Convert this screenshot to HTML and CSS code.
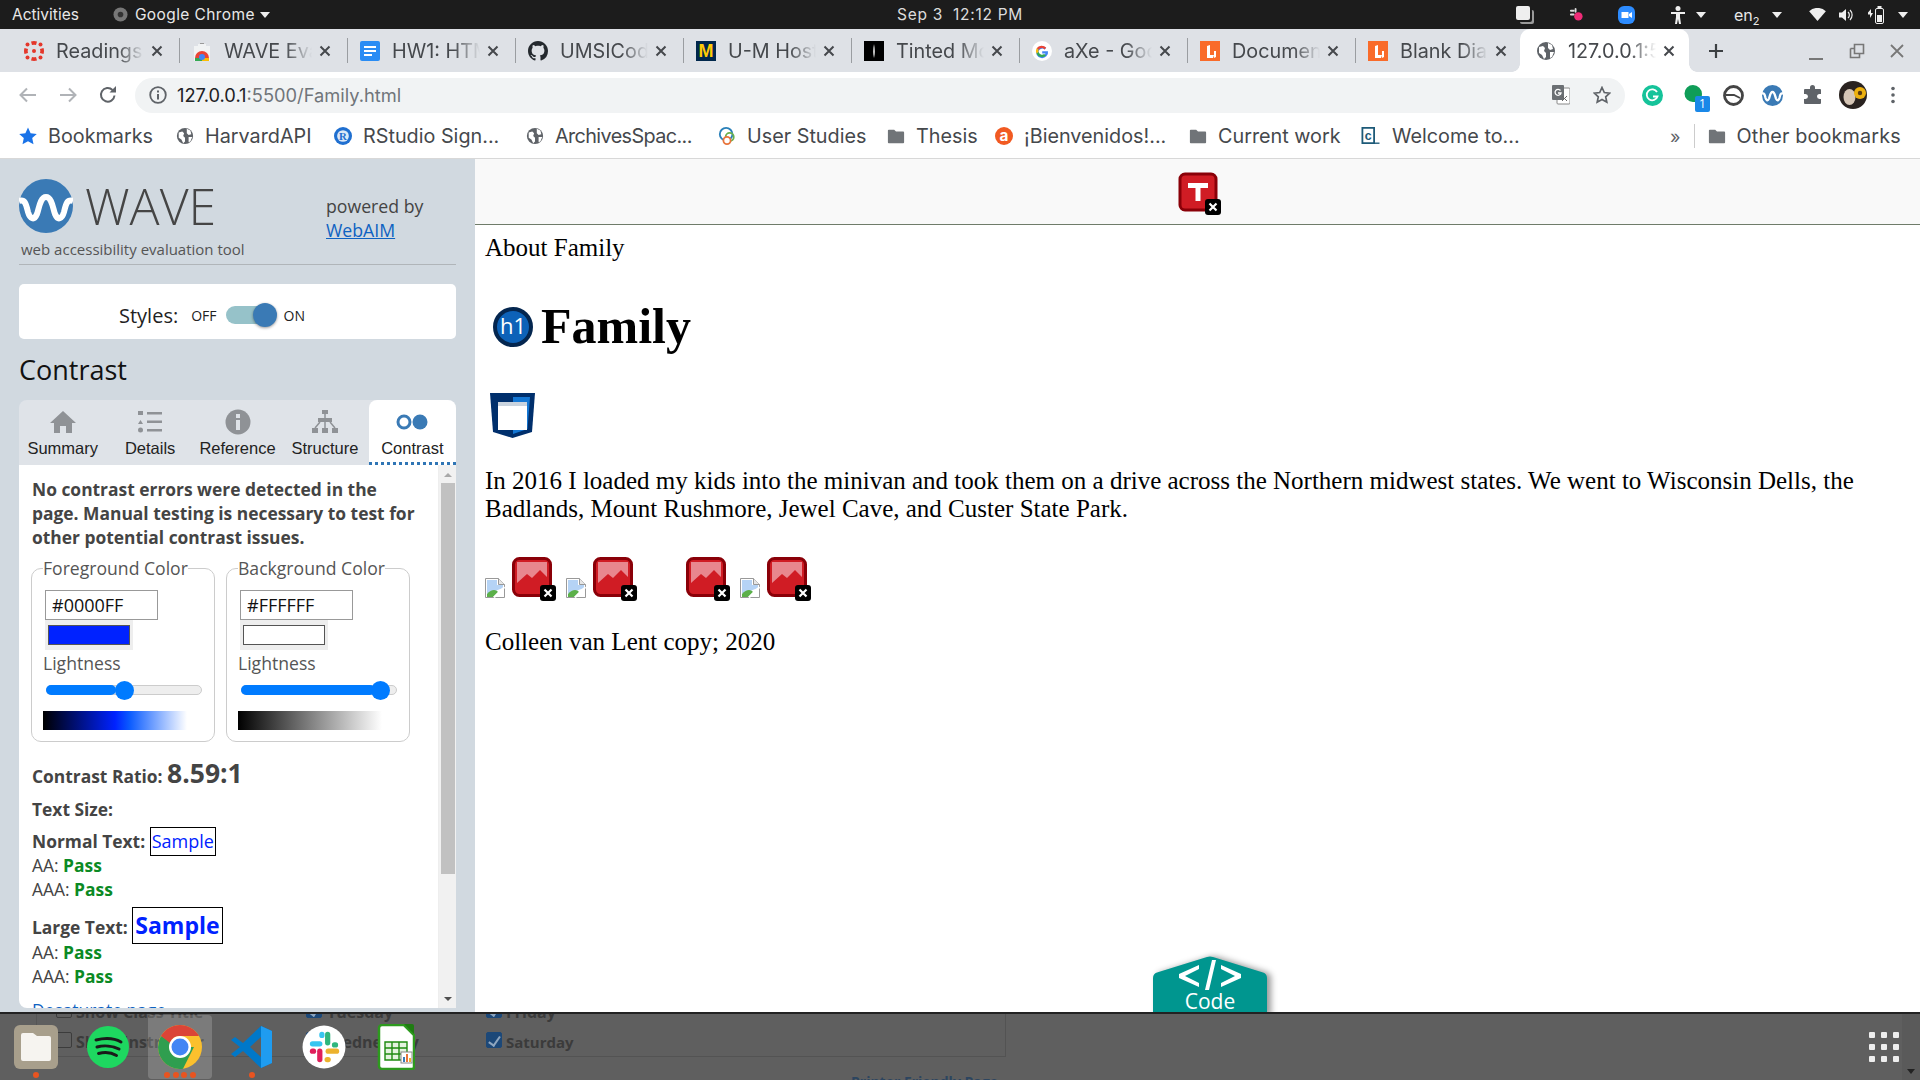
FILE: index.html
```html
<!DOCTYPE html>
<html lang="en">
<head>
<meta charset="utf-8">
<title>Family</title>
<link rel="stylesheet" href="styles.css">
</head>
<body>
<svg class="sprite" aria-hidden="true">
  <defs>
    <symbol id="i-x" viewBox="0 0 12 12"><path d="M1.5 1.5l9 9M10.5 1.5l-9 9" stroke="#45484c" stroke-width="2" fill="none"/></symbol>
    <symbol id="i-globe" viewBox="0 0 20 20"><circle cx="10" cy="10" r="9" fill="#5f6368"/><path d="M3 6l4-1 2 2-1 3 2 2v4l-2 2-2-4-3-2zM12 2l4 2 1 4-3 1-2-2zM14 11h4l-2 5-2 1z" fill="#fff"/></symbol>
    <symbol id="i-folder" viewBox="0 0 20 20"><path d="M2 3h6l2 2h8a1 1 0 0 1 1 1v11a1 1 0 0 1-1 1H2a1 1 0 0 1-1-1V4a1 1 0 0 1 1-1z" fill="#707478"/></symbol>
    <symbol id="i-canvas" viewBox="0 0 20 20"><g fill="#e4372b"><circle cx="10" cy="10" r="2"/><path d="M10 0a10 10 0 0 1 3 .5L12 4a6 6 0 0 0-4 0L7 .5A10 10 0 0 1 10 0zM10 20a10 10 0 0 1-3-.5L8 16a6 6 0 0 0 4 0l1 3.5a10 10 0 0 1-3 .5zM0 10a10 10 0 0 1 .5-3L4 8a6 6 0 0 0 0 4l-3.500 1A10 10 0 0 1 0 10zM20 10a10 10 0 0 1-.5 3L16 12a6 6 0 0 0 0-4l3.500-1a10 10 0 0 1 .5 3z"/><circle cx="3.500" cy="3.500" r="2"/><circle cx="16.500" cy="3.500" r="2"/><circle cx="3.500" cy="16.500" r="2"/><circle cx="16.500" cy="16.500" r="2"/></g></symbol>
    <symbol id="i-store" viewBox="0 0 20 20"><path d="M6 3h8v2h4v15H2V5h4z" fill="#f1f3f4"/><path d="M8 2h4v1H8z" fill="#999"/><path d="M3 17a7 7 0 0 1 14 0z" fill="#ea4335"/><path d="M3 17h7v3H3z" fill="#34a853"/><path d="M10 17h7v3h-7z" fill="#fbbc04"/><circle cx="10" cy="16" r="3" fill="#4285f4"/></symbol>
    <symbol id="i-docs" viewBox="0 0 20 20"><rect width="20" height="20" rx="2" fill="#2a8cf4"/><path d="M4 5h12v2H4zM4 9h12v2H4zM4 13h8v2H4z" fill="#fff"/></symbol>
    <symbol id="i-github" viewBox="0 0 16 16"><path fill="#24292e" d="M8 0C3.580 0 0 3.580 0 8c0 3.540 2.290 6.530 5.470 7.590.4.070.55-.17.55-.38 0-.19-.01-.82-.01-1.490-2.010.37-2.530-.49-2.690-.94-.09-.23-.48-.94-.82-1.130-.28-.15-.68-.52-.01-.53.63-.01 1.080.58 1.230.82.720 1.210 1.870.87 2.330.66.070-.52.280-.87.510-1.070-1.780-.2-3.640-.89-3.640-3.950 0-.87.310-1.590.820-2.150-.08-.2-.36-1.020.08-2.120 0 0 .67-.21 2.200.82.64-.18 1.320-.27 2-.27s1.360.09 2 .27c1.530-1.040 2.200-.82 2.200-.82.44 1.100.16 1.920.08 2.120.51.56.82 1.270.82 2.150 0 3.070-1.870 3.750-3.650 3.950.29.250.54.730.54 1.480 0 1.070-.01 1.930-.01 2.200 0 .21.150.46.550.38A8.010 8.010 0 0 0 16 8c0-4.420-3.580-8-8-8z"/></symbol>
    <symbol id="i-tinted" viewBox="0 0 20 20"><rect width="20" height="20" fill="#000"/><path d="M10 3c1 5 1 10 0 14c-1-4-1-9 0-14z" fill="#fff"/></symbol>
    <symbol id="i-google" viewBox="0 0 20 20"><circle cx="10" cy="10" r="10" fill="#fff"/><path d="M16 10.200h-5.800v2.300h3.300a3.600 3.600 0 1 1-1-4l1.700-1.700A6 6 0 1 0 16 10.200z" fill="#4285f4"/><path d="M4.600 7.300A6 6 0 0 1 14.200 6.800L12.500 8.500A3.600 3.600 0 0 0 6.600 8.800z" fill="#ea4335"/><path d="M4.600 7.300a6 6 0 0 0 0 5.400l2-1.600a3.600 3.600 0 0 1 0-2.300z" fill="#fbbc05"/><path d="M4.600 12.700a6 6 0 0 0 9.400 1.800l-1.900-1.500a3.600 3.600 0 0 1-5.500-1.900z" fill="#34a853"/></symbol>
    <symbol id="i-lucid" viewBox="0 0 20 20"><rect width="20" height="20" fill="#f96b2a"/><path d="M7 5l3-1v10l4 0-1 3H7zM14 10l2 0 0 6-2 1z" fill="#fff"/></symbol>
    <symbol id="i-wave" viewBox="0 0 54 54"><circle cx="27" cy="27" r="27" fill="#3a7ab5"/><path d="M0 22c6-2 7 3 9 11 2 7 6 9 9 2 2-5 3-17 9-17s7 12 9 17c3 7 7 5 9-2 2-8 3-13 9-11" fill="none" stroke="#fff" stroke-width="6"/></symbol>
    <symbol id="i-badge" viewBox="0 0 16 16"><rect width="16" height="16" rx="3" fill="#000"/><path d="M4.500 4.500l7 7M11.500 4.500l-7 7" stroke="#fff" stroke-width="2.200"/></symbol>
    <symbol id="i-redimg" viewBox="0 0 44 44"><rect x="1.500" y="1.500" width="37" height="37" rx="6" fill="#d01c24" stroke="#8a0008" stroke-width="3"/><path d="M5 5h30v15l-7-7-8 8-5-4-10 9z" fill="#e8878e"/><use href="#i-badge" x="28" y="28" width="16" height="16"/></symbol>
    <symbol id="i-broken" viewBox="0 0 20 20"><path d="M.5.5h13l6 6v13H.5z" fill="#fff" stroke="#999"/><path d="M13.500.5v6h6" fill="#e6e6e6" stroke="#999"/><path d="M2 2h10v5h6v3L2 16z" fill="#b5d3f5"/><path d="M2 19v-3c4-5 9-5 11-2l-5 5z" fill="#5cb04a"/><path d="M9 19.500L19.500 9" stroke="#fff" stroke-width="2"/></symbol>
    <symbol id="i-chrome" viewBox="0 0 44 44"><circle cx="22" cy="22" r="22" fill="#fbc02d"/><path d="M22 22L3 11A22 22 0 0 0 25 43.800L36 22z" fill="#2f9e4f"/><path d="M3 11A22 22 0 0 1 41 11H22a11 11 0 0 0-10 7z" fill="#db4437"/><circle cx="22" cy="22" r="11" fill="#fff"/><circle cx="22" cy="22" r="8.500" fill="#4285f4"/></symbol>
  </defs>
</svg>

<header class="topbar">
  <div class="tb-left">
    <span>Activities</span>
    <span class="tb-app"><svg class="tb-chrome" viewBox="0 0 16 16"><circle cx="8" cy="8" r="7.500" fill="#777"/><circle cx="8" cy="8" r="3" fill="#333"/></svg>Google Chrome<i class="caret"></i></span>
  </div>
  <div class="tb-clock">Sep 3&nbsp;&nbsp;12:12 PM</div>
  <div class="tb-right">
    <svg class="tb-i1" viewBox="0 0 18 18"><rect x="4" y="4" width="14" height="14" rx="2" fill="#9a9a9a"/><rect x="2.500" y="2.500" width="13.500" height="13.500" rx="2" fill="#1c1c1c"/><rect x="0" y="0" width="14" height="14" rx="2" fill="#eee"/></svg>
    <svg class="tb-i2" viewBox="0 0 16 16"><g fill="#ddd"><rect x="1" y="3" width="5" height="2" rx="1"/><rect x="1" y="7" width="5" height="2" rx="1"/><rect x="6" y="1" width="2" height="5" rx="1"/></g><circle cx="10" cy="10" r="4.500" fill="#ef2c77"/></svg>
    <svg class="tb-i3" viewBox="0 0 17 18"><rect width="17" height="18" rx="6" fill="#2d8cff"/><path d="M3.500 6h7v6h-7zM11 8l3-2v6l-3-2z" fill="#fff"/></svg>
    <svg class="tb-i4" viewBox="0 0 14 18"><circle cx="7" cy="2.500" r="2.500" fill="#eee"/><path d="M0 6h14v2H9v3l1 7H8l-1-5-1 5H4l1-7V8H0z" fill="#eee"/></svg>
    <i class="caret tb-c4"></i>
    <span class="tb-lang">en<sub>2</sub></span>
    <i class="caret tb-c5"></i>
    <svg class="tb-i5" viewBox="0 0 18 14"><path d="M0 3.500a13 13 0 0 1 18 0L9 14z" fill="#eee"/></svg>
    <svg class="tb-i6" viewBox="0 0 15 14"><path d="M0 4.500h3L7 1v12L3 9.500H0z" fill="#eee"/><path d="M9 4a4 4 0 0 1 0 6M11 2a7 7 0 0 1 0 10" stroke="#eee" fill="none" stroke-width="1.200"/></svg>
    <svg class="tb-i7" viewBox="0 0 16 18"><path d="M0 6.500L3 3v4h2l-3 5V8.500H0z" fill="#eee"/><rect x="7.500" y="2.500" width="8" height="15" rx="1.500" fill="none" stroke="#eee"/><rect x="9.500" y="0" width="4" height="2" fill="#eee"/><rect x="9" y="9" width="5" height="7" fill="#eee"/></svg>
    <i class="caret tb-c7"></i>
  </div>
</header>

<nav class="tabstrip">
  <div class="tab"><svg class="fav"><use href="#i-canvas"/></svg><span class="tab-title">Readings</span><svg class="tab-x"><use href="#i-x"/></svg></div>
  <div class="tab"><svg class="fav"><use href="#i-store"/></svg><span class="tab-title">WAVE Evaluation</span><svg class="tab-x"><use href="#i-x"/></svg></div>
  <div class="tab"><svg class="fav"><use href="#i-docs"/></svg><span class="tab-title">HW1: HTML</span><svg class="tab-x"><use href="#i-x"/></svg></div>
  <div class="tab"><svg class="fav"><use href="#i-github"/></svg><span class="tab-title">UMSICoding</span><svg class="tab-x"><use href="#i-x"/></svg></div>
  <div class="tab"><svg class="fav" viewBox="0 0 20 20"><rect width="20" height="20" fill="#00274c"/><text x="10" y="16" class="fav-m">M</text></svg><span class="tab-title">U-M Hosting</span><svg class="tab-x"><use href="#i-x"/></svg></div>
  <div class="tab"><svg class="fav"><use href="#i-tinted"/></svg><span class="tab-title">Tinted Moon</span><svg class="tab-x"><use href="#i-x"/></svg></div>
  <div class="tab"><svg class="fav"><use href="#i-google"/></svg><span class="tab-title">aXe - Google</span><svg class="tab-x"><use href="#i-x"/></svg></div>
  <div class="tab"><svg class="fav"><use href="#i-lucid"/></svg><span class="tab-title">Document</span><svg class="tab-x"><use href="#i-x"/></svg></div>
  <div class="tab tab-last"><svg class="fav"><use href="#i-lucid"/></svg><span class="tab-title">Blank Diagram</span><svg class="tab-x"><use href="#i-x"/></svg></div>
  <div class="tab tab-active"><svg class="fav"><use href="#i-globe"/></svg><span class="tab-title">127.0.0.1:5500</span><svg class="tab-x"><use href="#i-x"/></svg></div>
  <svg class="newtab" viewBox="0 0 16 16"><path d="M8 1v14M1 8h14" stroke="#3c4043" stroke-width="2.200"/></svg>
  <div class="winctl">
    <svg class="win-min" viewBox="0 0 16 16"><path d="M1 14h14" stroke="#777" stroke-width="2"/></svg>
    <svg class="win-max" viewBox="0 0 16 16"><path d="M5.500 1.500h9v9h-9zM1.500 5.500h4M1.500 5.500v9h9v-4" fill="none" stroke="#777" stroke-width="1.600"/></svg>
    <svg class="win-close" viewBox="0 0 16 16"><path d="M2 2l12 12M14 2L2 14" stroke="#777" stroke-width="1.800"/></svg>
  </div>
</nav>

<div class="toolbar">
  <svg class="nav-i" viewBox="0 0 18 16"><path d="M17 8H2M8 1.500L1.500 8 8 14.500" fill="none" stroke="#b0b3b7" stroke-width="2"/></svg>
  <svg class="nav-i nav-fwd" viewBox="0 0 18 16"><path d="M1 8h15M10 1.500L16.500 8 10 14.500" fill="none" stroke="#b0b3b7" stroke-width="2"/></svg>
  <svg class="nav-i nav-rel" viewBox="0 0 18 18"><path d="M15.500 9.500A6.800 6.800 0 1 1 13.500 4" fill="none" stroke="#5f6368" stroke-width="2"/><path d="M10.500 6.500H17V0z" fill="#5f6368"/></svg>
  <div class="omni">
    <svg class="omni-info" viewBox="0 0 18 18"><circle cx="9" cy="9" r="7.800" fill="none" stroke="#5f6368" stroke-width="1.800"/><path d="M8 8h2v5.500H8zM8 4.500h2v2H8z" fill="#5f6368"/></svg>
    <span class="url"><b>127.0.0.1</b>:5500/Family.html</span>
    <svg class="omni-tr" viewBox="0 0 18 20"><rect x="5" y="3" width="13" height="16" rx="1" fill="#fff" stroke="#888"/><rect width="12" height="15" rx="1" fill="#6b6f73"/><path d="M8.500 5.500A3 3 0 1 0 9 8H6" fill="none" stroke="#fff" stroke-width="1.300"/><path d="M10 11l5 5M15 11l-5 5" stroke="#666"/></svg>
    <svg class="omni-star" viewBox="0 0 18 18"><path d="M9 1.500l2.300 5 5.400.6-4 3.700 1.100 5.400L9 13.500l-4.800 2.700 1.100-5.400-4-3.700 5.400-.6z" fill="none" stroke="#5f6368" stroke-width="1.700"/></svg>
  </div>
  <div class="exts">
    <svg class="ext ext-g" viewBox="0 0 21 21"><circle cx="10.500" cy="10.500" r="10.500" fill="#15c39a"/><path d="M15 7a5.500 5.500 0 1 0 .5 4.500H11" fill="none" stroke="#fff" stroke-width="1.800"/></svg>
    <span class="ext-wrap"><svg class="ext ext-h" viewBox="0 0 18 20"><path d="M9 0a9 9 0 0 1 9 9c0 6-5 9-7 11v-3H9A8.500 8.500 0 0 1 9 0z" fill="#0f9d58"/></svg><span class="ext-badge">1</span></span>
    <svg class="ext ext-c" viewBox="0 0 21 21"><circle cx="10.500" cy="10.500" r="9" fill="#fff" stroke="#444" stroke-width="2.800"/><path d="M3 10h8l6 3" fill="none" stroke="#444" stroke-width="1.800"/></svg>
    <svg class="ext ext-w"><use href="#i-wave"/></svg>
    <svg class="ext ext-p" viewBox="0 0 20 20"><path d="M7 2.500a2.500 2.500 0 0 1 5 0V4h5a1 1 0 0 1 1 1v4h-1.500a2.500 2.500 0 0 0 0 5H18v4a1 1 0 0 1-1 1H2a1 1 0 0 1-1-1v-4h1.500a2.500 2.500 0 0 0 0-5H1V5a1 1 0 0 1 1-1h5z" fill="#5f6368"/></svg>
    <svg class="ext ext-a" viewBox="0 0 28 28"><circle cx="14" cy="14" r="14" fill="#2a2320"/><ellipse cx="10.500" cy="16" rx="6" ry="8" fill="#d6c6b6"/><circle cx="21" cy="12" r="6" fill="#edb10f"/><circle cx="21" cy="12" r="2.200" fill="#5a3a10"/></svg>
    <svg class="ext ext-d" viewBox="0 0 4 18"><circle cx="2" cy="2.500" r="1.800" fill="#5f6368"/><circle cx="2" cy="9" r="1.800" fill="#5f6368"/><circle cx="2" cy="15.500" r="1.800" fill="#5f6368"/></svg>
  </div>
</div>

<div class="bookmarks">
  <span class="bm bm-1"><svg class="bm-i bm-star" viewBox="0 0 18 18"><path d="M9 .5l2.600 5.700 6.200.7-4.600 4.200 1.300 6.100L9 14.200l-5.500 3 1.300-6.100L.2 6.900l6.200-.7z" fill="#1a73e8"/></svg>Bookmarks</span>
  <span class="bm bm-2"><svg class="bm-i"><use href="#i-globe"/></svg>HarvardAPI</span>
  <span class="bm bm-3"><svg class="bm-i" viewBox="0 0 20 20"><circle cx="10" cy="10" r="10" fill="#1f6fd0"/><circle cx="10" cy="10" r="6.500" fill="#dbe8f6"/><text x="10" y="14.500" class="fav-r">R</text></svg>RStudio Sign...</span>
  <span class="bm bm-4"><svg class="bm-i"><use href="#i-globe"/></svg><span class="bm-tight">ArchivesSpac...</span></span>
  <span class="bm bm-5"><svg class="bm-i" viewBox="0 0 20 20"><circle cx="9" cy="8" r="7" fill="none" stroke="#2a80b9" stroke-width="2"/><circle cx="13" cy="11" r="4.500" fill="none" stroke="#6ab04c" stroke-width="2"/><circle cx="10" cy="15" r="4" fill="#fff" stroke="#e8743b" stroke-width="2"/></svg>User Studies</span>
  <span class="bm bm-6"><svg class="bm-i"><use href="#i-folder"/></svg>Thesis</span>
  <span class="bm bm-7"><svg class="bm-i" viewBox="0 0 20 20"><circle cx="10" cy="10" r="10" fill="#f15a22"/><text x="10" y="15.500" class="fav-a">a</text></svg>¡Bienvenidos!...</span>
  <span class="bm bm-8"><svg class="bm-i"><use href="#i-folder"/></svg>Current work</span>
  <span class="bm bm-9"><svg class="bm-i bm-c" viewBox="0 0 20 20"><path d="M1 1h13v17H1z" fill="#fff" stroke="#1d5a78" stroke-width="2"/><text x="7.500" y="14" class="fav-c">c</text><path d="M15 18h5" stroke="#1d5a78" stroke-width="1.500"/></svg>Welcome to...</span>
  <span class="bm-more">»</span>
  <span class="bm-sep"></span>
  <span class="bm bm-other"><svg class="bm-i"><use href="#i-folder"/></svg>Other bookmarks</span>
</div>

<main class="main">
  <aside class="sidebar">
    <div class="wave-head">
      <div class="brand">
        <div class="brand-top"><svg class="wave-logo"><use href="#i-wave"/></svg><span class="wave-name">WAVE</span></div>
        <div class="wave-sub">web accessibility evaluation tool</div>
      </div>
      <div class="powered">powered by<br><a href="#">WebAIM</a></div>
    </div>
    <div class="styles-card">
      <span class="styles-label">Styles:</span>
      <span class="styles-off">OFF</span>
      <span class="toggle"><i class="toggle-knob"></i></span>
      <span class="styles-on">ON</span>
    </div>
    <h2 class="panel-title">Contrast</h2>
    <div class="wtabs">
      <div class="wtab">
        <svg class="wt-i" viewBox="0 0 26 24"><path d="M13 1L0 13h4v10h6v-7h6v7h6V13h4z" fill="#8f9296"/></svg>
        Summary
      </div>
      <div class="wtab">
        <svg class="wt-i" viewBox="0 0 26 24"><path d="M1 1h5v4H1zM10 2h15v2.500H10zM3.500 10l2.500 4H1zM10 10.500h15V13H10zM10 19h15v2.500H10z" fill="#8f9296"/><circle cx="3.500" cy="20" r="2.500" fill="#8f9296"/></svg>
        Details
      </div>
      <div class="wtab">
        <svg class="wt-i" viewBox="0 0 26 26"><circle cx="13" cy="13" r="12.500" fill="#8f9296"/><path d="M11 11h4v10h-4zM11 5h4v4h-4z" fill="#dfe3e8"/></svg>
        Reference
      </div>
      <div class="wtab">
        <svg class="wt-i" viewBox="0 0 26 24"><path d="M10 0h6v4h-6zM6 8h14v4H6zM0 18h6v5H0zM10 18h6v5h-6zM20 18h6v5h-6z" fill="#8f9296"/><path d="M13 4v14M8 12l-5 6M18 12l5 6" stroke="#8f9296" stroke-width="1.500"/></svg>
        Structure
      </div>
      <div class="wtab wtab-active">
        <svg class="wt-i wt-i-c" viewBox="0 0 32 16"><circle cx="8" cy="8" r="6" fill="none" stroke="#3a7ab5" stroke-width="3"/><circle cx="24" cy="8" r="7.500" fill="#3a7ab5"/></svg>
        Contrast
      </div>
    </div>
    <section class="panel">
      <div class="panel-body">
        <p class="lead">No contrast errors were detected in the page. Manual testing is necessary to test for other potential contrast issues.</p>
        <div class="pickers">
          <fieldset class="picker">
            <legend>Foreground Color</legend>
            <input class="hex" type="text" value="#0000FF" readonly>
            <div class="swatch"><i class="swatch-in swatch-blue"></i></div>
            <div class="pick-label">Lightness</div>
            <div class="slider"><i class="slider-fill slider-50"></i><i class="slider-thumb slider-t50"></i></div>
            <div class="grad grad-blue"></div>
          </fieldset>
          <fieldset class="picker">
            <legend>Background Color</legend>
            <input class="hex" type="text" value="#FFFFFF" readonly>
            <div class="swatch"><i class="swatch-in swatch-white"></i></div>
            <div class="pick-label">Lightness</div>
            <div class="slider"><i class="slider-fill slider-100"></i><i class="slider-thumb slider-t100"></i></div>
            <div class="grad grad-grey"></div>
          </fieldset>
        </div>
        <p class="ratio"><b>Contrast Ratio:</b> <b class="ratio-num">8.59:1</b></p>
        <p class="size-h"><b>Text Size:</b></p>
        <p class="norm"><b>Normal Text:</b> <span class="sample">Sample</span></p>
        <p class="res">AA: <b class="pass">Pass</b></p>
        <p class="res">AAA: <b class="pass">Pass</b></p>
        <p class="large"><b>Large Text:</b> <span class="sample sample-lg">Sample</span></p>
        <p class="res">AA: <b class="pass">Pass</b></p>
        <p class="res">AAA: <b class="pass">Pass</b></p>
        <p class="desat"><a href="#">Desaturate page</a></p>
      </div>
      <div class="scrollbar">
        <i class="sb-up"></i>
        <i class="sb-thumb"></i>
        <i class="sb-down"></i>
      </div>
    </section>
  </aside>

  <div class="page">
    <div class="wave-bar">
      <svg class="red-t" viewBox="0 0 46 46"><rect x="2" y="2" width="36" height="36" rx="5" fill="#d01c24" stroke="#8a0008" stroke-width="3"/><path d="M10 11h20v5h-7.500v13h-5V16H10z" fill="#fff"/><use href="#i-badge" x="27" y="27" width="16" height="16"/></svg>
    </div>
    <div class="content">
      <div class="about">About Family</div>
      <h1 class="fam">
        <svg class="h1-ic" viewBox="0 0 40 40"><circle cx="20" cy="20" r="18" fill="#0d62b8" stroke="#04264f" stroke-width="4"/><text x="20" y="27" class="h1-t">h1</text></svg>
        Family
      </h1>
      <svg class="shield" viewBox="0 0 45 45"><path d="M0 0h45l-3 39-19.500 6L3 39z" fill="#002f6c"/><path d="M23 4h17l-2.500 32L23 41z" fill="#1477d4"/><rect x="8" y="12" width="29" height="25" fill="#fff"/><rect x="8" y="9" width="29" height="4" fill="#c9d3de"/></svg>
      <p class="para">In 2016 I loaded my kids into the minivan and took them on a drive across the Northern midwest states. We went to Wisconsin Dells, the Badlands, Mount Rushmore, Jewel Cave, and Custer State Park.</p>
      <div class="imgs">
        <svg class="broken"><use href="#i-broken"/></svg>
        <svg class="redimg"><use href="#i-redimg"/></svg>
        <svg class="broken"><use href="#i-broken"/></svg>
        <svg class="redimg"><use href="#i-redimg"/></svg>
        <svg class="redimg redimg-far"><use href="#i-redimg"/></svg>
        <svg class="broken"><use href="#i-broken"/></svg>
        <svg class="redimg"><use href="#i-redimg"/></svg>
      </div>
      <p class="foot">Colleen van Lent copy; 2020</p>
    </div>
    <svg class="codebtn" viewBox="0 0 124 60">
      <path class="code-shape" d="M0 60V22a6 6 0 0 1 4-5.500L54 1a8 8 0 0 1 6 0l50 15.500a6 6 0 0 1 4 5.500V60z" fill="#00968f"/>
      <path d="M26 18l20-9v4l-14 7 14 7v4l-20-9zM88 18l-20-9v4l14 7-14 7v4l20-9zM52 34l7-30h4l-7 30z" fill="#fff"/>
      <text x="57" y="53" class="code-t">Code</text>
    </svg>
  </div>
</main>

<footer class="dock">
  <div class="ghost">
    <i class="g-line-v"></i>
    <i class="g-line-h"></i>
    <i class="g-cb g-cb1"></i>
    <span class="g-t g-t1">Show Class Title</span>
    <i class="g-cb g-cb2"></i>
    <span class="g-t g-t2">Show Instructor</span>
    <i class="g-cb g-blue g-cb3"></i>
    <span class="g-t g-t3">Tuesday</span>
    <i class="g-cb g-blue g-cb4"></i>
    <span class="g-t g-t4">Wednesday</span>
    <i class="g-cb g-blue g-cb5"></i>
    <span class="g-t g-t5">Friday</span>
    <i class="g-cb g-blue g-cb6"></i>
    <span class="g-t g-t6">Saturday</span>
    <span class="g-t g-t7">Printer Friendly Page</span>
    <i class="g-shade"></i>
    <i class="g-caret"></i>
  </div>
  <div class="app">
    <svg class="app-i" viewBox="0 0 44 44"><rect x="0" y="0" width="44" height="44" rx="6" fill="#a89f8c"/><path d="M7 10a2 2 0 0 1 2-2h10l4 3h12a2 2 0 0 1 2 2v21a2 2 0 0 1-2 2H9a2 2 0 0 1-2-2z" fill="#f6f4f0"/></svg>
    <i class="dot"></i>
  </div>
  <div class="app">
    <svg class="app-i" viewBox="0 0 44 44"><circle cx="22" cy="22" r="21" fill="#1ed760"/><path d="M10 15c8-2 18-2 25 2M11 22c7-2 16-1 22 2M12.500 28.500c6-1.500 13-1 18 2" fill="none" stroke="#1a1a1a" stroke-width="3" stroke-linecap="round"/></svg>
  </div>
  <div class="app app-on">
    <svg class="app-i"><use href="#i-chrome"/></svg>
    <span class="dots"><i class="dot"></i><i class="dot"></i><i class="dot"></i><i class="dot"></i></span>
  </div>
  <div class="app">
    <svg class="app-i" viewBox="0 0 44 44"><path d="M31 1l11 5v32l-11 5L13 26 5 32l-4-3 9-7-9-7 4-3 8 6z" fill="#0078c9"/><path d="M31 1l11 5v32l-11 5z" fill="#1f9cf0"/><path d="M31 12v20l-11-10z" fill="#5e5e5e"/></svg>
    <i class="dot"></i>
  </div>
  <div class="app">
    <svg class="app-i" viewBox="0 0 42 42"><circle cx="21" cy="21" r="20.500" fill="#fff"/><g stroke-width="5" stroke-linecap="round"><path d="M24.500 9v8" stroke="#2eb67d"/><path d="M32 19h-1" stroke="#2eb67d"/><path d="M10 18h7" stroke="#36c5f0"/><path d="M19 10v-1" stroke="#36c5f0"/><path d="M25 25h8" stroke="#ecb22e"/><path d="M24 33h1" stroke="#ecb22e"/><path d="M17 25v8" stroke="#e01e5a"/><path d="M10 25h1" stroke="#e01e5a"/></g></svg>
  </div>
  <div class="app">
    <svg class="app-i app-calc" viewBox="0 0 38 46"><path d="M2 4a3 3 0 0 1 3-3h22l10 10v32a2 2 0 0 1-2 2H5a3 3 0 0 1-3-3z" fill="#fff" stroke="#2d9a1e" stroke-width="2.500"/><path d="M27 0l10 10V2a2 2 0 0 0-2-2z" fill="#1f7d12"/><path d="M8 18h22v18H8zM8 24h22M8 30h22M15 18v18M22 18v18" fill="#e4f3df" stroke="#1f8a10" stroke-width="1.400"/><rect x="24" y="28" width="11" height="11" fill="#fff" stroke="#888"/><path d="M26 33h2v5h-2z" fill="#3a7ab5"/><path d="M29 30h2v8h-2z" fill="#e8743b"/><path d="M32 34h2v4h-2z" fill="#ecb22e"/></svg>
  </div>
  <div class="appgrid">
    <i></i><i></i><i></i><i></i><i></i><i></i><i></i><i></i><i></i>
  </div>
</footer>
</body>
</html>
```

FILE: styles.css
```css
* { box-sizing: border-box; }
html, body { margin: 0; height: 100%; }
body {
  display: flex;
  flex-direction: column;
  width: 1920px;
  height: 1080px;
  overflow: hidden;
  background: #fff;
  font-family: "Liberation Serif", serif;
}
.sprite { position: absolute; width: 0; height: 0; }

/* GNOME top bar */
.topbar {
  height: 29px;
  flex: none;
  display: grid;
  grid-template-columns: 1fr auto 1fr;
  align-items: center;
  background: #1c1c1c;
  color: #e8e8e8;
  font: 15.500px "Inter", "Open Sans", sans-serif;
}
.tb-left { display: flex; align-items: center; gap: 34px; padding-left: 12px; }
.tb-app { display: flex; align-items: center; letter-spacing: .4px; }
.tb-chrome { width: 15px; height: 15px; margin-right: 7px; }
.caret { display: inline-block; width: 0; height: 0; border: 5px solid transparent; border-top: 6px solid #eee; border-bottom: 0; }
.tb-app .caret { margin-left: 5px; }
.tb-clock { color: #dcdcdc; letter-spacing: .7px; }
.tb-right { display: flex; align-items: center; justify-content: flex-end; height: 29px; }
.tb-i1 { width: 18px; height: 18px; margin-right: 35px; }
.tb-i2 { width: 15px; height: 15px; margin-right: 34px; }
.tb-i3 { width: 17px; height: 18px; margin-right: 36px; }
.tb-i4 { width: 14px; height: 18px; margin-right: 11px; }
.tb-c4 { margin-right: 28px; }
.tb-lang { width: 38px; font-size: 16px; }
.tb-lang sub { font-size: 11px; line-height: 0; }
.tb-c5 { margin-right: 27px; }
.tb-i5 { width: 17px; height: 13px; margin-right: 13px; }
.tb-i6 { width: 15px; height: 14px; margin-right: 14px; }
.tb-i7 { width: 16px; height: 18px; margin-right: 14px; }
.tb-c7 { margin-right: 12px; }

/* Chrome tab strip */
.tabstrip {
  height: 43px;
  flex: none;
  display: flex;
  background: #dee1e6;
  padding-left: 8px;
  font: 19.800px "Inter", "Open Sans", sans-serif;
  color: #45484c;
}
.tab {
  position: relative;
  width: 168px;
  flex: none;
  display: flex;
  align-items: center;
  padding-left: 16px;
}
.tab::after {
  content: "";
  position: absolute;
  right: -4px;
  top: 9px;
  height: 25px;
  width: 1px;
  background: #9a9da1;
}
.tab-last::after { display: none; }
.fav { width: 20px; height: 20px; flex: none; margin-right: 12px; }
.tab-title {
  width: 88px;
  white-space: nowrap;
  overflow: hidden;
  -webkit-mask-image: linear-gradient(90deg, #000 70%, transparent 100%);
  mask-image: linear-gradient(90deg, #000 70%, transparent 100%);
}
.tab-x { width: 12px; height: 12px; margin-left: 7px; flex: none; }
.tab-active { background: #fff; border-radius: 10px 10px 0 0; width: 169px; }
.tab-active::before,
.tab-active::after {
  content: "";
  display: block;
  position: absolute;
  top: auto;
  bottom: 0;
  width: 8px;
  height: 8px;
}
.tab-active::before { left: -8px; background: radial-gradient(circle at 0 0, transparent 7.500px, #fff 8px); }
.tab-active::after { right: -8px; background: radial-gradient(circle at 100% 0, transparent 7.500px, #fff 8px); }
.newtab { width: 16px; height: 16px; flex: none; align-self: center; margin-left: 19px; }
.winctl { margin-left: auto; display: flex; align-items: center; }
.winctl svg { width: 16px; height: 16px; }
.win-min { margin-right: 25px; position: relative; top: 2px; }
.win-max { margin-right: 24px; }
.win-close { margin-right: 15px; }
.fav-m { font: 900 18px "Liberation Sans", sans-serif; fill: #ffcb05; text-anchor: middle; }
.fav-r { font: 700 12px "Liberation Serif", serif; fill: #1f6fd0; text-anchor: middle; }
.fav-a { font: 700 17px "Inter", sans-serif; fill: #fff; text-anchor: middle; }
.fav-c { font: 700 14px "Liberation Mono", monospace; fill: #1d5a78; text-anchor: middle; }

/* Chrome toolbar */
.toolbar {
  height: 46px;
  flex: none;
  display: flex;
  align-items: center;
  background: #fff;
  padding-left: 19px;
}
.nav-i { width: 18px; height: 16px; flex: none; margin-right: 22px; }
.nav-fwd { margin-right: 22px; }
.nav-rel { height: 18px; margin-right: 18px; }
.omni {
  width: 1490px;
  height: 35px;
  flex: none;
  display: flex;
  align-items: center;
  background: #f1f3f4;
  border-radius: 18px;
  padding-left: 14px;
  font: 18.300px "Inter", "Open Sans", sans-serif;
  color: #70757a;
}
.omni-info { width: 18px; height: 18px; margin-right: 11px; }
.url { margin-left: -1px; }
.url b { font-weight: 400; color: #202124; }
.omni-tr { width: 18px; height: 20px; margin-left: auto; margin-right: 23px; }
.omni-star { width: 18px; height: 18px; margin-right: 14px; }
.exts { display: flex; align-items: center; padding-left: 17px; }
.ext { flex: none; display: block; }
.ext-g { width: 21px; height: 21px; margin-right: 21px; }
.ext-wrap { position: relative; width: 18px; margin-right: 21px; }
.ext-h { width: 18px; height: 20px; }
.ext-badge {
  position: absolute;
  left: 11px;
  top: 11px;
  width: 15px;
  height: 16px;
  background: #1a88e8;
  border-radius: 2px;
  color: #fff;
  font: 12px/16px "Open Sans", sans-serif;
  text-align: center;
}
.ext-c { width: 21px; height: 21px; margin-right: 18px; }
.ext-w { width: 21px; height: 21px; margin-right: 20px; }
.ext-p { width: 20px; height: 20px; margin-right: 16px; }
.ext-a { width: 28px; height: 28px; margin-right: 24px; }
.ext-d { width: 4px; height: 18px; }

/* Bookmarks bar */
.bookmarks {
  height: 41px;
  flex: none;
  display: flex;
  align-items: center;
  background: #fff;
  border-bottom: 1px solid #d8d8d8;
  padding: 0 0 4px 19px;
  font: 19.800px "Inter", "Open Sans", sans-serif;
  color: #45484c;
  white-space: nowrap;
}
.bm { display: flex; align-items: center; flex: none; }
.bm-i { width: 18px; height: 18px; margin-right: 11px; flex: none; }
.bm-1 { width: 157px; }
.bm-2 { width: 158px; }
.bm-3 { width: 192px; }
.bm-4 { width: 192px; }
.bm-5 { width: 169px; }
.bm-6 { width: 108px; }
.bm-7 { width: 194px; }
.bm-8 { width: 171px; }
.bm-9 { width: 200px; }
.bm-c { width: 21px; }
.bm-tight { letter-spacing: -.6px; }
.bm-more { margin-left: 110px; color: #5f6368; font-size: 18px; }
.bm-sep { width: 1px; height: 24px; background: #ccc; margin: 0 13px; }
.bm-other { flex: none; letter-spacing: .15px; }

/* Main */
.main {
  flex: 1;
  min-height: 0;
  display: flex;
  overflow: hidden;
}
.sidebar {
  width: 475px;
  flex: none;
  display: flex;
  flex-direction: column;
  background: #d1d9e0;
  padding: 0 19px 4px;
  font-family: "Open Sans", sans-serif;
}
.wave-head {
  height: 106px;
  flex: none;
  display: flex;
  border-bottom: 1px solid #b0b5b9;
  padding-top: 19px;
}
.brand { width: 307px; }
.brand-top { display: flex; align-items: center; }
.wave-logo { width: 54px; height: 54px; flex: none; margin-right: 12px; }
.wave-name { font-size: 50px; font-weight: 300; color: #454545; line-height: 54px; padding-top: 1px; }
.wave-sub { font-size: 15px; color: #555; padding: 6px 0 0 2px; line-height: 20px; }
.powered { font-size: 17.700px; line-height: 24px; color: #444; padding-top: 16px; }
.powered a { color: #0e62c2; }
.styles-card {
  height: 55px;
  flex: none;
  margin-top: 19px;
  background: #fff;
  border-radius: 5px;
  display: flex;
  align-items: center;
  padding: 7px 0 0 100px;
  font-size: 14px;
  color: #222;
}
.styles-label { font-size: 20px; margin-right: 13px; }
.styles-off { margin-right: 9px; }
.toggle { position: relative; width: 44px; height: 18px; border-radius: 9px; background: #96c2c9; margin-right: 14px; }
.toggle-knob {
  position: absolute;
  left: 27px;
  top: -3px;
  width: 24px;
  height: 24px;
  border-radius: 50%;
  background: #3a7ab5;
  box-shadow: 0 1px 3px rgba(0,0,0,.4);
}
.panel-title {
  height: 61px;
  flex: none;
  margin: 0;
  font-size: 27px;
  font-weight: 400;
  line-height: 61px;
  color: #111;
}
.wtabs {
  height: 65px;
  flex: none;
  display: flex;
  background: #dfe3e8;
  border-radius: 8px 8px 0 0;
}
.wtab {
  flex: 1;
  display: flex;
  flex-direction: column;
  align-items: center;
  padding-top: 9px;
  font: 16.500px "Liberation Sans", sans-serif;
  color: #222;
  white-space: nowrap;
}
.wt-i { width: 26px; height: 26px; margin-bottom: 4px; flex: none; }
.wtab-active { background: #fff; border-radius: 8px 8px 0 0; border-bottom: 3px dotted #2f75b5; }
.wt-i-c { width: 32px; }
.panel {
  flex: 1;
  min-height: 0;
  display: flex;
  background: #fff;
  border-radius: 0 0 0 8px;
  overflow: hidden;
}
.panel-body {
  flex: 1;
  min-width: 0;
  padding: 12px 0 0 13px;
  font-size: 17.400px;
  line-height: 24px;
  color: #444;
  overflow: hidden;
}
.panel-body p { margin: 0; }
.lead { font-weight: 700; width: 390px; }
.pickers { display: flex; gap: 11px; margin-top: 7px; margin-left: -1px; }
.picker {
  width: 184px;
  height: 186px;
  margin: 0;
  padding: 0 0 0 11px;
  border: 1px solid #ccc;
  border-radius: 10px;
  min-width: 0;
}
.picker legend { padding: 0; font-size: 17.600px; line-height: 24px; color: #555; white-space: nowrap; }
.hex {
  display: block;
  width: 113px;
  height: 30px;
  margin: 10px 0 0 2px;
  padding: 0 6px;
  border: 1px solid #999;
  font: 18px "Open Sans", sans-serif;
  color: #111;
  background: #fff;
  border-radius: 0;
}
.swatch { width: 88px; height: 30px; margin-left: 2px; padding: 5px 3px; background: #eee; }
.swatch-in { display: block; width: 82px; height: 20px; border: 1px solid #555; }
.swatch-blue { background: #0022ff; }
.swatch-white { background: #fff; }
.pick-label { font-size: 17.600px; line-height: 24px; color: #555; margin-top: 1px; }
.slider {
  position: relative;
  width: 156px;
  height: 10px;
  margin: 10px 0 0 3px;
  border-radius: 5px;
  background: #eee;
  border: 1px solid #ccc;
}
.slider-fill { position: absolute; left: -1px; top: -1px; height: 10px; border-radius: 5px; background: #007bff; }
.slider-50 { width: 70px; }
.slider-100 { width: 134px; }
.slider-thumb { position: absolute; top: -5px; width: 19px; height: 19px; border-radius: 50%; background: #007bff; }
.slider-t50 { left: 68px; }
.slider-t100 { left: 129px; }
.grad { width: 144px; height: 19px; margin-top: 16px; }
.grad-blue { background: linear-gradient(90deg, #000 0%, #0022ff 50%, #0a5bff 60%, #fff 100%); }
.grad-grey { background: linear-gradient(90deg, #000 0%, #808080 50%, #fff 100%); }
.panel-body .ratio { margin-top: 13px; line-height: 36px; }
.ratio-num { font-size: 26.500px; }
.panel-body .size-h { margin-top: 3px; }
.panel-body .norm { margin-top: 8px; }
.sample {
  display: inline-block;
  border: 1px solid #000;
  margin: -3px 0;
  padding: 0 1px;
  color: #0022ff;
  font-size: 18px;
  line-height: 27px;
}
.res { line-height: 24px; }
.pass { color: #0b8a24; }
.panel-body .large { margin: 14px 0 0; }
.sample-lg { margin: -9px 0 -4px; font-size: 23px; font-weight: 700; line-height: 35px; padding: 0 2px; }
.panel-body .desat { margin-top: 10px; }
.desat a { color: #0e62c2; }
.scrollbar {
  position: relative;
  width: 18px;
  flex: none;
  display: flex;
  flex-direction: column;
  align-items: center;
  background: #f1f1f1;
  border-left: 1px solid #eee;
}
.sb-up { width: 0; height: 0; margin-top: 8px; border: 4px solid transparent; border-top: 0; border-bottom: 4px solid #a8a8a8; }
.sb-thumb { width: 14px; height: 391px; margin-top: 6px; background: #c1c1c1; }
.sb-down { width: 0; height: 0; margin-top: auto; margin-bottom: 7px; border: 4px solid transparent; border-bottom: 0; border-top: 4px solid #505050; }

/* Page */
.page {
  position: relative;
  flex: 1;
  min-width: 0;
  overflow: hidden;
  background: #fff;
  color: #000;
}
.wave-bar {
  height: 66px;
  display: flex;
  justify-content: center;
  align-items: flex-start;
  background: #f9f9f9;
  border-bottom: 1px solid #6f7c6a;
  padding-top: 13px;
}
.red-t { width: 46px; height: 46px; margin-left: 6px; }
.content { padding: 9px 10px 0; font-size: 25px; line-height: 28px; }
.about { height: 28px; }
.fam {
  display: flex;
  align-items: center;
  height: 55px;
  margin: 37px 0 0;
  font-size: 50px;
  line-height: 55px;
  font-weight: 700;
}
.h1-ic { width: 40px; height: 40px; margin: 0 8px 0 8px; flex: none; }
.h1-t { font: 22px "Open Sans", sans-serif; fill: #fff; text-anchor: middle; }
.shield { display: block; width: 45px; height: 45px; margin: 39px 0 0 5px; }
.para { margin: 29px 0 0; }
.imgs { display: flex; align-items: flex-end; margin-top: 34px; height: 44px; }
.broken { width: 20px; height: 20px; margin: 0 7px 3px 0; flex: none; }
.redimg { width: 44px; height: 44px; margin-right: 10px; flex: none; }
.redimg-far { margin-left: 39px; }
.foot { margin: 27px 0 0; }
.codebtn {
  position: absolute;
  left: 678px;
  bottom: -4px;
  width: 124px;
  height: 60px;
  overflow: visible;
}
.code-shape { filter: drop-shadow(4px 0 3px rgba(0,0,0,.4)); }
.code-t { font: 21px "Open Sans", sans-serif; fill: #fff; text-anchor: middle; }

/* Dock */
.dock {
  position: relative;
  height: 68px;
  flex: none;
  display: flex;
  align-items: center;
  background: #5f5f5f;
  border-top: 2px solid #222;
  overflow: hidden;
}
.ghost { position: absolute; inset: 0; font: 700 16px "Open Sans", sans-serif; color: #3b3b3b; }
.g-line-v { position: absolute; left: 36px; top: 0; width: 1px; height: 42px; background: #555; }
.g-line-h { position: absolute; left: 36px; top: 42px; width: 970px; height: 1px; background: #535353; }
.g-line-h::after { content: ""; position: absolute; right: 0; top: -42px; width: 1px; height: 42px; background: #535353; }
.g-cb { position: absolute; width: 16px; height: 16px; border: 1px solid #3c3c3c; border-radius: 2px; }
.g-blue { background: #1c4878; border-color: #1c4878; }
.g-blue::after {
  content: "";
  position: absolute;
  left: 4px;
  top: 1px;
  width: 5px;
  height: 10px;
  border: solid #8fa6bf;
  border-width: 0 2px 2px 0;
  transform: rotate(35deg);
}
.g-cb1 { left: 56px; top: -12px; }
.g-cb2 { left: 56px; top: 18px; }
.g-cb3 { left: 306px; top: -12px; }
.g-cb4 { left: 306px; top: 18px; }
.g-cb5 { left: 486px; top: -12px; }
.g-cb6 { left: 486px; top: 18px; }
.g-t { position: absolute; white-space: nowrap; line-height: 20px; }
.g-t1 { left: 76px; top: -12px; }
.g-t2 { left: 76px; top: 18px; }
.g-t3 { left: 327px; top: -12px; }
.g-t4 { left: 327px; top: 18px; }
.g-t5 { left: 506px; top: -12px; }
.g-t6 { left: 506px; top: 18px; font-size: 15px; }
.g-t7 { left: 851px; top: 58px; font-size: 14px; color: #2c4560; }
.g-shade { position: absolute; right: 0; top: 0; width: 18px; height: 66px; background: #5a5a5a; }
.g-caret { position: absolute; right: 5px; bottom: 6px; width: 0; height: 0; border: 4px solid transparent; border-bottom: 0; border-top: 5px solid #222; }
.app {
  position: relative;
  width: 72px;
  height: 66px;
  flex: none;
  display: flex;
  align-items: center;
  justify-content: center;
}
.app-i { width: 44px; height: 44px; display: block; }
.app-calc { width: 38px; height: 46px; }
.app-on::before {
  content: "";
  position: absolute;
  left: 4px;
  top: 1px;
  width: 64px;
  height: 64px;
  border-radius: 4px;
  background: rgba(255,255,255,.18);
}
.app-on .app-i { position: relative; }
.dot {
  position: absolute;
  left: 33px;
  bottom: 2px;
  width: 6px;
  height: 6px;
  border-radius: 50%;
  background: #e95420;
}
.dots { position: absolute; left: 0; right: 0; bottom: 2px; display: flex; justify-content: center; gap: 2.600px; }
.dots .dot { position: static; }
.appgrid {
  position: relative;
  margin-left: auto;
  margin-right: 21px;
  display: grid;
  grid-template-columns: repeat(3, 6px);
  gap: 6px;
}
.appgrid i { width: 6px; height: 6px; border-radius: 1px; background: #eee; }
```
